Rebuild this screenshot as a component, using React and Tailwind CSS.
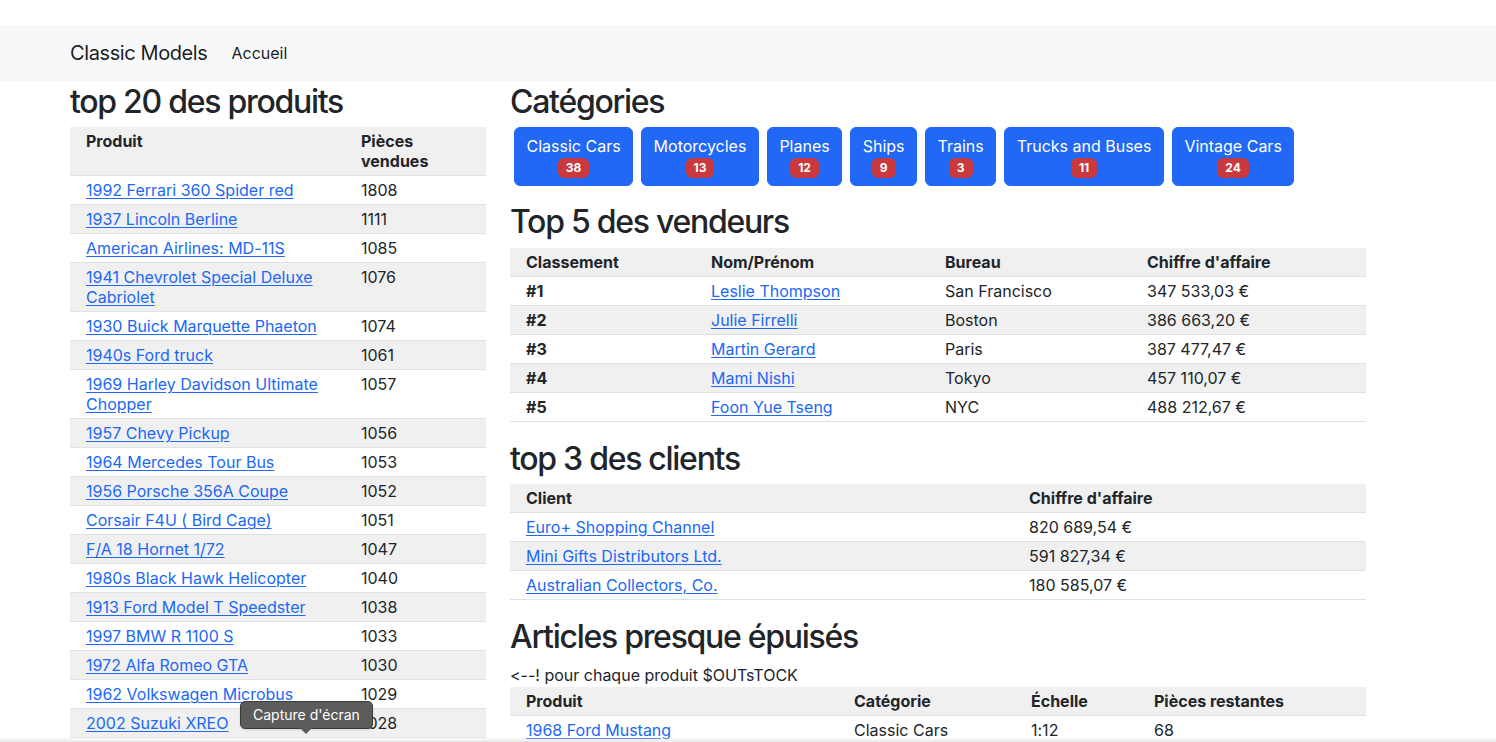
import React from 'react';

const topProducts = [
  ['1992 Ferrari 360 Spider red', 1808],
  ['1937 Lincoln Berline', 1111],
  ['American Airlines: MD-11S', 1085],
  ['1941 Chevrolet Special Deluxe Cabriolet', 1076],
  ['1930 Buick Marquette Phaeton', 1074],
  ['1940s Ford truck', 1061],
  ['1969 Harley Davidson Ultimate Chopper', 1057],
  ['1957 Chevy Pickup', 1056],
  ['1964 Mercedes Tour Bus', 1053],
  ['1956 Porsche 356A Coupe', 1052],
  ['Corsair F4U ( Bird Cage)', 1051],
  ['F/A 18 Hornet 1/72', 1047],
  ['1980s Black Hawk Helicopter', 1040],
  ['1913 Ford Model T Speedster', 1038],
  ['1997 BMW R 1100 S', 1033],
  ['1972 Alfa Romeo GTA', 1030],
  ['1962 Volkswagen Microbus', 1029],
  ['2002 Suzuki XREO', 1028],
];

const categories = [
  ['Classic Cars', 38],
  ['Motorcycles', 13],
  ['Planes', 12],
  ['Ships', 9],
  ['Trains', 3],
  ['Trucks and Buses', 11],
  ['Vintage Cars', 24],
];

const sellers = [
  ['#1', 'Leslie Thompson', 'San Francisco', '347 533,03 €'],
  ['#2', 'Julie Firrelli', 'Boston', '386 663,20 €'],
  ['#3', 'Martin Gerard', 'Paris', '387 477,47 €'],
  ['#4', 'Mami Nishi', 'Tokyo', '457 110,07 €'],
  ['#5', 'Foon Yue Tseng', 'NYC', '488 212,67 €'],
];

const clients = [
  ['Euro+ Shopping Channel', '820 689,54 €'],
  ['Mini Gifts Distributors Ltd.', '591 827,34 €'],
  ['Australian Collectors, Co.', '180 585,07 €'],
];

const lowStock = [['1968 Ford Mustang', 'Classic Cars', '1:12', '68']];

const cell = 'px-4 py-1 leading-5 align-top text-left border-b border-[#dee2e6]';
const link = 'text-[#2068f5] underline underline-offset-2';

function Heading({ children }) {
  return (
    <h2 className="text-[32px] leading-[38.4px] font-medium tracking-[-0.04em] pt-[2px] mb-[6px] text-[#212529]">
      {children}
    </h2>
  );
}

function Table({ widths, head, rows }) {
  return (
    <table className="w-full table-fixed border-collapse mb-4">
      <colgroup>
        {widths.map((w, i) => (
          <col key={i} style={{ width: w }} />
        ))}
      </colgroup>
      <thead>
        <tr className="bg-[#f0f0f0]">
          {head.map((h) => (
            <th key={h} className={`${cell} font-bold`}>{h}</th>
          ))}
        </tr>
      </thead>
      <tbody>
        {rows.map((r, i) => (
          <tr key={i} className={i % 2 === 1 ? 'bg-[#f0f0f0]' : 'bg-white'}>
            {r}
          </tr>
        ))}
      </tbody>
    </table>
  );
}

export default function App() {
  return (
    <div className="relative min-h-[742px] bg-white text-[#212529] text-base font-['Inter','Noto_Sans',sans-serif] [font-feature-settings:'calt'_0,'liga'_0] pt-[25px]">
      {/* Navbar */}
      <nav className="h-[56px] bg-[#f7f8f9] flex items-center px-[70px]">
        <span className="text-[20px] tracking-[-0.02em] text-black/90 mr-4">Classic Models</span>
        <a className="px-2 text-black/90">Accueil</a>
      </nav>

      <div className="flex gap-6 pl-[70px]">
        {/* Left column */}
        <div className="w-[416px] shrink-0">
          <Heading>top 20 des produits</Heading>
          <Table
            widths={['275px', '141px']}
            head={['Produit', 'Pièces vendues']}
            rows={topProducts.map(([name, qty]) => [
              <td key="a" className={cell}><a className={link}>{name}</a></td>,
              <td key="b" className={cell}>{qty}</td>,
            ])}
          />
        </div>

        {/* Right column */}
        <div className="w-[856px] shrink-0">
          <Heading>Catégories</Heading>
          <div className="flex gap-2 pl-1 mb-[15px]">
            {categories.map(([name, n]) => (
              <button
                key={name}
                className="bg-[#2068f5] text-white rounded-md border border-[#2068f5] px-[11.5px] pt-1.5 pb-[7px] leading-6 text-center"
              >
                <div>{name}</div>
                <div className="flex justify-center">
                  <span className="bg-[#c9393e] text-white text-[12px] font-bold leading-3 px-[8px] py-[4px] rounded-md">
                    {n}
                  </span>
                </div>
              </button>
            ))}
          </div>

          <Heading>Top 5 des vendeurs</Heading>
          <Table
            widths={['185px', '234px', '202px', '235px']}
            head={['Classement', 'Nom/Prénom', 'Bureau', "Chiffre d'affaire"]}
            rows={sellers.map(([rank, name, office, ca]) => [
              <th key="a" className={`${cell} font-bold`}>{rank}</th>,
              <td key="b" className={cell}><a className={link}>{name}</a></td>,
              <td key="c" className={cell}>{office}</td>,
              <td key="d" className={cell}>{ca}</td>,
            ])}
          />

          <Heading>top 3 des clients</Heading>
          <Table
            widths={['503px', '353px']}
            head={['Client', "Chiffre d'affaire"]}
            rows={clients.map(([name, ca]) => [
              <td key="a" className={cell}><a className={link}>{name}</a></td>,
              <td key="b" className={cell}>{ca}</td>,
            ])}
          />

          <Heading>Articles presque épuisés</Heading>
          <p className="leading-6">{'<--! pour chaque produit $OUTsTOCK'}</p>
          <Table
            widths={['328px', '177px', '123px', '228px']}
            head={['Produit', 'Catégorie', 'Échelle', 'Pièces restantes']}
            rows={lowStock.map(([name, cat, scale, left]) => [
              <td key="a" className={cell}><a className={link}>{name}</a></td>,
              <td key="b" className={cell}>{cat}</td>,
              <td key="c" className={cell}>{scale}</td>,
              <td key="d" className={cell}>{left}</td>,
            ])}
          />
        </div>
      </div>

      {/* Screenshot tooltip */}
      <div className="absolute left-[240px] top-[701px] flex flex-col items-center">
        <div className="bg-[#5b5b5b] border border-[#3c3c3c] rounded-[5px] text-white text-[14px] leading-5 px-3 py-[3px] shadow">
          Capture d'écran
        </div>
        <div className="w-0 h-0 border-l-[6px] border-r-[6px] border-t-[6px] border-l-transparent border-r-transparent border-t-[#5b5b5b] -mt-px" />
      </div>

      <div className="fixed left-0 right-0 bottom-0 h-[5px] bg-linear-to-b from-transparent to-[#e9e9e9]" />
    </div>
  );
}
